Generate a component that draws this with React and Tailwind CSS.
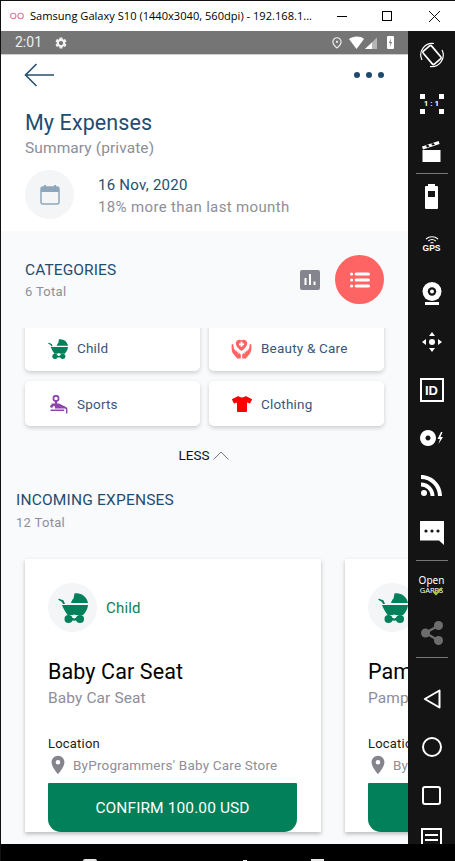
import React from "react";
import { MdSettings, MdPlace, MdOutlinePlace } from "react-icons/md";
import { FaTshirt } from "react-icons/fa";

function Stroller({ size = 30, color = "#018059", bg = "#fff" }) {
  return (
    <svg width={size} height={size} viewBox="0 0 30 30" fill={color}>
      <path d="M0 6.6 L1.2 5.8 L5.6 7.4 L7 11 L5 11 L3.9 9 Z" />
      <path d="M13 10 C13.5 8 14.5 6.5 15.5 5.5 L16.5 0.5 C23 -0.5 29 4 30 10 Z" />
      <path d="M4 12 H30 C29.6 16 27.6 19.4 25 22 H9.6 C7.4 19 5.4 15.6 4 12 Z" />
      <circle cx="10.5" cy="26" r="4" />
      <circle cx="22" cy="26" r="4" />
      <rect x="10" y="24.6" width="12" height="3" />
      <circle cx="16.2" cy="23.4" r="2" fill={bg} />
    </svg>
  );
}

function Care() {
  return (
    <svg width="21" height="21" viewBox="0 0 21 21" fill="#ff6464">
      <path d="M10.5 13 C6.5 10 4.8 7.8 4.8 5 C4.8 2.2 8.5 0.6 10.5 2.6 C12.5 0.6 16.2 2.2 16.2 5 C16.2 7.8 14.5 10 10.5 13 Z" />
      <rect x="9.6" y="3.8" width="1.8" height="5" fill="#fff" />
      <rect x="8" y="5.4" width="5" height="1.8" fill="#fff" />
      <path d="M0.6 6.5 L2.2 6 L3 11 L7 13.6 L9.8 16.4 V20.5 H6.2 L2 15.5 C1 14 0.6 12 0.6 10 Z" />
      <path d="M20.4 6.5 L18.8 6 L18 11 L14 13.6 L11.2 16.4 V20.5 H14.8 L19 15.5 C20 14 20.4 12 20.4 10 Z" />
      <path d="M3.8 11.6 L7 14 L8 16" stroke="#fff" strokeWidth="0.8" fill="none" />
      <path d="M17.2 11.6 L14 14 L13 16" stroke="#fff" strokeWidth="0.8" fill="none" />
    </svg>
  );
}

function Sports() {
  return (
    <svg width="18" height="19" viewBox="0 0 18 19" fill="#8e44ad">
      <circle cx="6" cy="3.4" r="2.6" fill="none" stroke="#8e44ad" strokeWidth="1.7" />
      <rect x="4.9" y="5.5" width="2.2" height="4" />
      <path d="M1.5 8.6 H9 L14.5 11.2 C16.2 11.9 17.4 12.6 17.4 14 V18.5 H16 V14.6 C16 13.8 15 13.4 13.8 13.4 H5 V11.2 H1.5 Z" />
      <circle cx="1.6" cy="11.4" r="1.4" />
      <rect x="0.4" y="14.4" width="14" height="1.6" rx="0.8" />
    </svg>
  );
}

function Calendar() {
  return (
    <svg width="20" height="20" viewBox="0 0 20 20">
      <rect x="4" y="0" width="2" height="3" fill="#8ea6bb" />
      <rect x="14" y="0" width="2" height="3" fill="#8ea6bb" />
      <path d="M1 5 a3 3 0 0 1 3 -3 H16 a3 3 0 0 1 3 3 V7 H1 Z" fill="#8ea6bb" />
      <rect x="1" y="2" width="18" height="17" rx="2" fill="none" stroke="#8ea6bb" strokeWidth="1.5" />
    </svg>
  );
}

function ListIcon() {
  return (
    <svg width="20" height="16" viewBox="0 0 20 16" fill="#fff">
      <circle cx="1.6" cy="2" r="1.6" />
      <circle cx="1.6" cy="8" r="1.6" />
      <circle cx="1.6" cy="14" r="1.6" />
      <rect x="4.6" y="0.4" width="15.4" height="3.2" rx="1.6" />
      <rect x="4.6" y="6.4" width="15.4" height="3.2" rx="1.6" />
      <rect x="4.6" y="12.4" width="15.4" height="3.2" rx="1.6" />
    </svg>
  );
}

function CategoryCard({ icon, label, className = "" }) {
  return (
    <div className={`flex w-[175px] items-center rounded-[5px] bg-white shadow-[0_2px_4px_rgba(0,0,0,0.18)] ${className}`}>
      <div className="flex w-[44px] justify-end pr-[1px]">{icon}</div>
      <span className="ml-[8px] text-[13.5px] tracking-[0.2px] text-[#38567a]">{label}</span>
    </div>
  );
}

function ExpenseCard({ title }) {
  return (
    <div className="flex h-[273px] w-[296px] shrink-0 flex-col bg-white px-[23px] pt-[24px] shadow-[0_2px_4px_rgba(0,0,0,0.25)]">
      <div className="flex items-center">
        <div className="flex h-[49px] w-[49px] items-center justify-center rounded-full bg-[#f3f5f7]">
          <Stroller bg="#f3f5f7" />
        </div>
        <span className="ml-[9px] pt-[1px] text-[15px] tracking-[0.2px] text-[#0b8059]">Child</span>
      </div>
      <div className="mt-[25px] text-[21.5px] leading-[30px] tracking-[0.1px] text-black">{title}</div>
      <div className="mt-[1px] text-[15.5px] leading-[20px] tracking-[0.1px] text-[#8e8e98]">{title}</div>
      <div className="mt-[27px] text-[13px] leading-[18px] tracking-[0.2px] text-[#222]">Location</div>
      <div className="mt-[1px] flex h-[22px] items-center">
        <MdPlace size={22} color="#85858f" className="-ml-[1px] shrink-0" />
        <span className="ml-[4px] whitespace-nowrap text-[13.5px] tracking-[0.2px] text-[#8e8e98]">ByProgrammers' Baby Care Store</span>
      </div>
      <div className="mt-[7px] flex h-[49px] w-[249px] items-center justify-center rounded-t-[1px] rounded-b-[13px] bg-[#018059] pt-[2px] text-[15.5px] tracking-[0.1px] text-white">
        CONFIRM 100.00 USD
      </div>
    </div>
  );
}

function Side({ h, children, className = "" }) {
  return <div className={`flex w-full shrink-0 items-center justify-center ${h} ${className}`}>{children}</div>;
}

function Sidebar() {
  const w = "#ffffff";
  return (
    <div className="flex h-[813px] w-[47px] shrink-0 flex-col items-center overflow-hidden bg-[#141414]">
      <Side h="h-[48px]">
        <svg width="24" height="26" viewBox="0 0 24 26" fill="none" stroke={w} strokeWidth="1.2">
          <rect x="6.5" y="4.5" width="11" height="17" rx="1.5" transform="rotate(-40 12 13)" strokeWidth="1.7" />
          <path d="M2 18 A11.5 11.5 0 0 1 14 1.5" />
          <path d="M22 8 A11.5 11.5 0 0 1 10 24.5" />
        </svg>
      </Side>
      <Side h="h-[50px]">
        <div className="relative flex h-[20px] w-[24px] items-center justify-center text-[8px] font-bold leading-none text-white">
          1 : 1
          <span className="absolute left-0 top-0 h-[5px] w-[5px] bg-white" />
          <span className="absolute right-0 top-0 h-[5px] w-[5px] bg-white" />
          <span className="absolute bottom-0 left-0 h-[5px] w-[5px] bg-white" />
          <span className="absolute bottom-0 right-0 h-[5px] w-[5px] bg-white" />
        </div>
      </Side>
      <Side h="h-[44px]">
        <svg width="19" height="21" viewBox="0 0 19 21" fill={w}>
          <rect x="0.5" y="9" width="18" height="12" />
          <path d="M0 5.6 L16.6 0 L17.6 3 L1 8.6 Z" />
          <path d="M3.6 4.6 L6 3.8 L7.6 5.6 L5.2 6.4 Z M9 2.8 L11.4 2 L13 3.8 L10.6 4.6 Z" fill="#141414" />
        </svg>
      </Side>
      <div className="h-[1px] w-[32px] shrink-0 bg-[#777]" />
      <Side h="h-[46px]">
        <div className="relative flex h-[23px] w-[13px] flex-col items-center rounded-[1px] bg-white pt-[5px]">
          <span className="absolute -top-[2px] left-[3px] h-[2px] w-[7px] bg-white" />
          <span className="h-[6px] w-[7px] bg-[#141414]" />
        </div>
      </Side>
      <Side h="h-[49px]" className="flex-col">
        <svg width="14" height="8" viewBox="0 0 14 8" fill="none" stroke={w} strokeWidth="1.1">
          <path d="M1 3 A9 9 0 0 1 13 3" />
          <path d="M3.2 5 A6 6 0 0 1 10.8 5" />
          <path d="M5.5 7 A3 3 0 0 1 8.5 7" />
        </svg>
        <span className="text-[8.5px] font-bold leading-[9px] text-white" style={{ fontFamily: "Liberation Sans, sans-serif" }}>GPS</span>
      </Side>
      <Side h="h-[48px]">
        <svg width="20" height="23" viewBox="0 0 20 23">
          <circle cx="10" cy="9.5" r="9.5" fill={w} />
          <circle cx="10" cy="9.5" r="4.2" fill="#141414" />
          <circle cx="10" cy="9.5" r="2" fill={w} />
          <rect x="3" y="20" width="14" height="3" fill={w} />
        </svg>
      </Side>
      <Side h="h-[50px]">
        <svg width="22" height="22" viewBox="0 0 22 22" fill={w}>
          <circle cx="11" cy="11" r="3" />
          <path d="M11 1 L14 5 H8 Z M11 21 L8 17 H14 Z M1 11 L5 8 V14 Z M21 11 L17 14 V8 Z" />
        </svg>
      </Side>
      <Side h="h-[46px]">
        <div className="flex h-[24px] w-[24px] items-center justify-center border-2 border-white text-[13px] font-bold leading-none text-white" style={{ fontFamily: "Liberation Sans, sans-serif" }}>ID</div>
      </Side>
      <Side h="h-[49px]">
        <svg width="24" height="16" viewBox="0 0 24 16" fill={w}>
          <path fillRule="evenodd" d="M8 0 a8 8 0 1 0 0.01 0 Z M8 5.5 a2.5 2.5 0 1 1 -0.01 0 Z" />
          <path d="M21 2 L17.5 9 H20 L18.5 14 L23 7 H20.5 L22.5 2 Z" />
        </svg>
      </Side>
      <Side h="h-[47px]">
        <svg width="21" height="21" viewBox="0 0 21 21" fill={w}>
          <path d="M0 0 C11.6 0 21 9.4 21 21 H17 C17 11.6 9.4 4 0 4 Z" />
          <path d="M0 7.5 C7.5 7.5 13.5 13.5 13.5 21 H9.6 C9.6 15.7 5.3 11.4 0 11.4 Z" />
          <circle cx="3" cy="18" r="3" />
        </svg>
      </Side>
      <Side h="h-[51px]" className="pb-[3px]">
        <svg width="24" height="24" viewBox="0 0 24 24">
          <path d="M0 0 H24 V24 L19 19.5 H0 Z" fill={w} />
          <circle cx="6" cy="10" r="1.6" fill="#141414" />
          <circle cx="12" cy="10" r="1.6" fill="#141414" />
          <circle cx="18" cy="10" r="1.6" fill="#141414" />
        </svg>
      </Side>
      <div className="h-[1px] w-[32px] shrink-0 bg-[#777]" />
      <Side h="h-[48px]" className="relative flex-col">
        <span className="text-[10px] leading-[11px] text-white" style={{ fontFamily: "Noto Sans, sans-serif" }}>Open</span>
        <span className="text-[7.5px] leading-[9px] text-white" style={{ fontFamily: "Noto Sans, sans-serif" }}>GAPPS</span>
        <svg width="11" height="9" viewBox="0 0 11 9" fill="none" stroke="#a6ce39" strokeWidth="2" className="absolute left-[24px] top-[26px]">
          <path d="M1 4 L4 7 L10 1" />
        </svg>
      </Side>
      <Side h="h-[48px]">
        <svg width="22" height="24" viewBox="0 0 22 24" fill="#6d6d6d">
          <circle cx="4.5" cy="12" r="4.5" />
          <circle cx="17.5" cy="4.5" r="4.5" />
          <circle cx="17.5" cy="19.5" r="4.5" />
          <path d="M4.5 12 L17.5 4.5 M4.5 12 L17.5 19.5" stroke="#6d6d6d" strokeWidth="2.4" />
        </svg>
      </Side>
      <div className="h-[1px] w-[32px] shrink-0 bg-[#777]" />
      <Side h="h-[48px]" className="mt-[17px]">
        <svg width="18" height="20" viewBox="0 0 18 20" fill="none" stroke={w} strokeWidth="2">
          <path d="M16.5 1.5 V18.5 L1.8 10 Z" strokeLinejoin="round" />
        </svg>
      </Side>
      <Side h="h-[48px]">
        <div className="h-[20px] w-[20px] rounded-full border-2 border-white" />
      </Side>
      <Side h="h-[48px]">
        <div className="h-[19px] w-[19px] rounded-[3px] border-2 border-white" />
      </Side>
      <Side h="h-[30px]" className="items-start">
        <div className="mt-[9px] flex h-[22px] w-[21px] flex-col gap-[3px] border-2 border-white px-[2px] pt-[4px]">
          <span className="h-[2px] w-full bg-white" />
          <span className="h-[2px] w-full bg-white" />
        </div>
      </Side>
    </div>
  );
}

export default function App() {
  return (
    <div className="flex h-[861px] w-[455px] flex-col overflow-hidden bg-black" style={{ fontFamily: "Roboto, sans-serif" }}>
      {/* window title bar */}
      <div className="flex h-[31px] shrink-0 items-center border-t border-l border-[#111] bg-white">
        <svg width="14" height="8" viewBox="0 0 14 8" fill="none" stroke="#e8789f" strokeWidth="1.1" className="ml-[9px] mt-[-1px]">
          <circle cx="3.2" cy="4" r="2.7" />
          <circle cx="10.6" cy="4" r="2.7" />
        </svg>
        <span className="ml-[6px] w-[285px] whitespace-nowrap text-[11.1px] text-black" style={{ fontFamily: "Open Sans, sans-serif" }}>
          Samsung Galaxy S10 (1440x3040, 560dpi) - 192.168.1...
        </span>
        <span className="ml-[22px] h-[1px] w-[10px] bg-black" />
        <span className="ml-[35px] h-[10px] w-[10px] border border-black" />
        <svg width="11" height="11" viewBox="0 0 11 11" stroke="#111" strokeWidth="1" className="ml-[37px]">
          <path d="M0 0 L11 11 M11 0 L0 11" />
        </svg>
      </div>

      <div className="flex min-h-0 flex-1">
        <div className="flex w-[408px] shrink-0 flex-col border-l border-[#111]">
          {/* status bar */}
          <div className="flex h-[24px] shrink-0 items-center border-b border-[#cfcfcf] bg-[#757575] pl-[14px] pr-[14px] text-white">
            <span className="text-[14px] text-[#ededed]">2:01</span>
            <MdSettings size={14} color="#f2f2f2" className="ml-[12px]" />
            <MdOutlinePlace size={14} color="#eee" className="ml-auto" />
            <svg width="33" height="14" viewBox="0 0 33 14" className="ml-[3px]">
              <path d="M0 3 C4 0 11 -0.5 15 3 L7.5 13 Z" fill="#fff" transform="translate(2 0)" />
              <path d="M30 1.5 V13 H18 Z" fill="#b5b5b5" />
              <path d="M25 6.5 V13 H18 Z" fill="#fff" />
            </svg>
            <span className="relative ml-[7px] h-[13px] w-[7px] rounded-[1px] bg-white">
              <svg width="7" height="13" viewBox="0 0 7 13" className="absolute left-0 top-0">
                <path d="M4 2 L2 7 H3.5 L3 11 L5 6 H3.5 Z" fill="#757575" />
              </svg>
            </span>
          </div>

          {/* white header section */}
          <div className="h-[176px] shrink-0 bg-white">
            <div className="flex h-[39px] items-center justify-between px-[24px]">
              <svg width="30" height="24" viewBox="0 0 30 24" fill="none" stroke="#264f70" strokeWidth="1.6" className="-ml-[1px]">
                <path d="M30 12 H1.5 M12.5 1 L1.5 12 L12.5 23" />
              </svg>
              <div className="flex gap-[6px]">
                <span className="h-[6px] w-[6px] rounded-full bg-[#1d4a6d]" />
                <span className="h-[6px] w-[6px] rounded-full bg-[#1d4a6d]" />
                <span className="h-[6px] w-[6px] rounded-full bg-[#1d4a6d]" />
              </div>
            </div>
            <div className="mt-[15px] pl-[24px] text-[21.5px] leading-[28px] tracking-[0.1px] text-[#1f4d70]">My Expenses</div>
            <div className="mt-[1px] pl-[24px] text-[15.5px] leading-[20px] tracking-[0.1px] text-[#8e8e98]">Summary (private)</div>
            <div className="mt-[12px] flex pl-[24px]">
              <div className="flex h-[49px] w-[49px] items-center justify-center rounded-full bg-[#f3f5f7]">
                <Calendar />
              </div>
              <div className="ml-[24px] flex flex-col">
                <span className="mt-[5px] text-[15px] leading-[20px] tracking-[0.25px] text-[#24506f]">16 Nov, 2020</span>
                <span className="mt-[2px] text-[15px] leading-[20px] tracking-[0.35px] text-[#8e8e98]">18% more than last mounth</span>
              </div>
            </div>
          </div>

          {/* grey scrolling section */}
          <div className="min-h-0 flex-1 overflow-hidden bg-[#f9fafc]">
            <div className="mt-[24px] flex h-[49px] items-center pl-[24px] pr-[24px]">
              <div className="flex flex-col self-start pt-[5px]">
                <span className="text-[15.5px] leading-[20px] tracking-[0.1px] text-[#1f4d70]">CATEGORIES</span>
                <span className="mt-[3px] text-[13px] leading-[18px] tracking-[0.3px] text-[#8e8e98]">6 Total</span>
              </div>
              <div className="ml-auto flex h-[20px] w-[20px] items-center justify-center rounded-[2px] bg-[#85858f]">
                <svg width="12" height="11" viewBox="0 0 12 11" fill="#fff">
                  <rect x="0.5" y="4" width="2" height="7" />
                  <rect x="5" y="0" width="2" height="11" />
                  <rect x="9.5" y="7.5" width="2" height="3.5" />
                </svg>
              </div>
              <div className="ml-[15px] flex h-[49px] w-[49px] items-center justify-center rounded-full bg-[#ff6464]">
                <ListIcon />
              </div>
            </div>

            {/* clipped list of categories */}
            <div className="mt-[24px] h-[103px] overflow-hidden pl-[24px]">
              <div className="-mt-[12px] grid w-[360px] grid-cols-[175px_175px] gap-x-[9px] gap-y-[10px]">
                <CategoryCard className="h-[55px] pt-[10px]" icon={<Stroller size={20} />} label="Child" />
                <CategoryCard className="h-[55px] pt-[10px]" icon={<Care />} label="Beauty & Care" />
                <CategoryCard className="h-[45px] pt-[1px]" icon={<Sports />} label="Sports" />
                <CategoryCard className="h-[45px] pt-[1px]" icon={<FaTshirt size={20} color="#ff0000" />} label="Clothing" />
              </div>
            </div>

            <div className="mt-[14px] flex h-[20px] items-center justify-center pr-[1px]">
              <span className="text-[13.5px] text-[#111]">LESS</span>
              <svg width="16" height="9" viewBox="0 0 16 9" fill="none" stroke="#777" strokeWidth="1" className="ml-[4px]">
                <path d="M0.5 8.5 L8 1 L15.5 8.5" />
              </svg>
            </div>

            <div className="mt-[25px] pl-[15px] text-[15.5px] leading-[20px] tracking-[0.2px] text-[#1f4d70]">INCOMING EXPENSES</div>
            <div className="mt-[4px] pl-[15px] text-[13px] leading-[18px] tracking-[0.3px] text-[#8e8e98]">12 Total</div>

            <div className="mt-[27px] flex gap-[24px] pl-[24px]">
              <ExpenseCard title="Baby Car Seat" />
              <ExpenseCard title="Pampers" />
            </div>
          </div>

          {/* nav bar */}
          <div className="flex h-[17px] shrink-0 items-end bg-black">
            <span className="ml-[82px] h-[2px] w-[14px] rounded-t-[2px] bg-[#e8e8e8]" />
            <span className="ml-[146px] h-[1px] w-[4px] bg-[#e8e8e8]" />
            <span className="ml-[64px] h-[2px] w-[13px] bg-[#e8e8e8]" />
          </div>
        </div>
        <Sidebar />
      </div>
    </div>
  );
}
